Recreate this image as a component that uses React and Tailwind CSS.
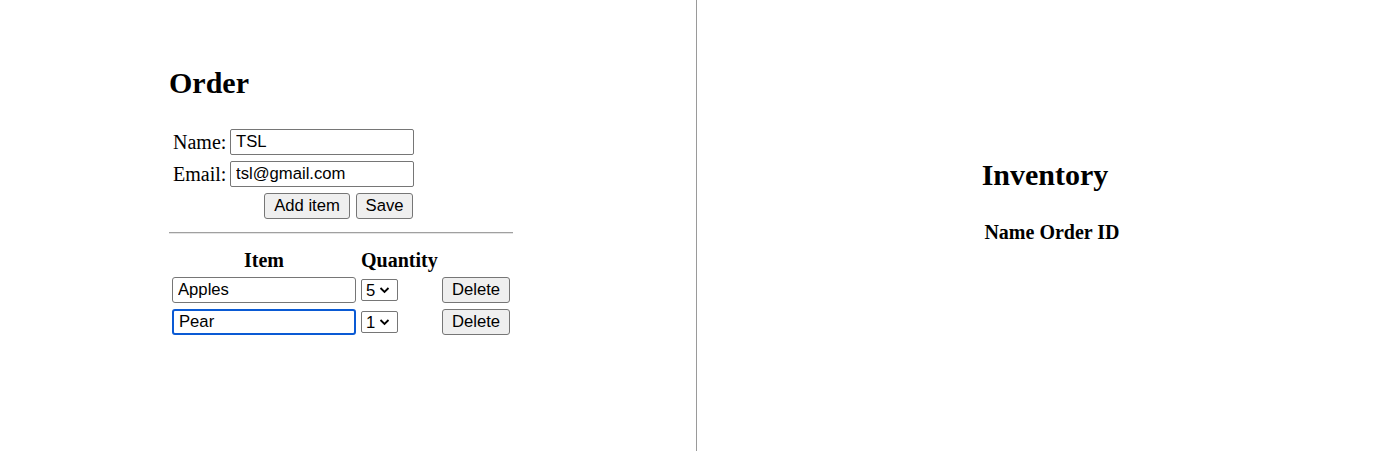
import React from 'react'

const serif = 'font-["Liberation_Serif","Times_New_Roman",serif]'
const sans = 'font-["Liberation_Sans",Arial,sans-serif]'

function Field({ label, value }) {
    return (
        <div className="flex items-center h-[26px]">
            <span className={`w-[61px] pl-[4px] text-[20px] leading-[23px] ${serif}`}>{label}</span>
            <input
                defaultValue={value}
                className={`w-[184px] h-[26px] px-[5px] border border-[#767676] rounded-[2px] text-[16.67px] text-black outline-none ${sans}`}
            />
        </div>
    )
}

function Btn({ children, className = '' }) {
    return (
        <button className={`h-[26px] border border-[#767676] rounded-[3px] bg-[#efefef] text-[16.67px] leading-none text-black ${sans} ${className}`}>
            {children}
        </button>
    )
}

function ItemRow({ name, qty, focused }) {
    return (
        <div className="flex items-center h-[26px]">
            <div className="w-[192px] pl-[3px]">
                <input
                    defaultValue={name}
                    className={`w-[184px] h-[26px] px-[5px] rounded-[3px] text-[16.67px] text-black outline-none ${sans} ${focused ? 'border-2 border-[#0a5ad4] px-[4px]' : 'border border-[#767676]'}`}
                />
            </div>
            <div className="w-[81px]">
                <div className={`w-[37px] h-[22px] border border-[#767676] rounded-[2px] flex items-center pl-[4px] gap-[4px] text-[16.67px] ${sans}`}>
                    <span>{qty}</span>
                    <svg width="11" height="8" viewBox="0 0 11 8" fill="none" stroke="black" strokeWidth="1.8">
                        <path d="M1.5 2 L5.5 6 L9.5 2" />
                    </svg>
                </div>
            </div>
            <Btn className="w-[68px]">Delete</Btn>
        </div>
    )
}

export default function App() {
    return (
        <div className="flex w-[1395px] h-[451px] bg-white text-black">
            {/* Order */}
            <div className="w-[697px] h-full border-r border-[#9a9a9a] pl-[169px] pt-[66px]">
                <div className="w-[344px]">
                    <h2 className={`text-[30px] leading-[34px] font-bold ${serif}`}>Order</h2>
                    <div className="mt-[29px] flex flex-col gap-[6px]">
                        <Field label="Name:" value="TSL" />
                        <Field label="Email:" value="tsl@gmail.com" />
                        <div className="flex gap-[6px] pl-[95px]">
                            <Btn className="w-[86px]">Add item</Btn>
                            <Btn className="w-[57px]">Save</Btn>
                        </div>
                    </div>
                    <div className="mt-[13px] h-[2px] border-t border-[#a0a0a0] border-b border-b-[#e4e4e4]" />
                    <div className={`mt-[15px] flex h-[23px] text-[20px] leading-[23px] font-bold ${serif}`}>
                        <span className="w-[192px] pl-[3px] pr-[5px] text-center">Item</span>
                        <span className="w-[81px]">Quantity</span>
                    </div>
                    <div className="mt-[5px] flex flex-col gap-[6px]">
                        <ItemRow name="Apples" qty="5" />
                        <ItemRow name="Pear" qty="1" focused />
                    </div>
                </div>
            </div>
            {/* Inventory */}
            <div className="flex-1 h-full flex flex-col items-center pt-[158px]">
                <h2 className={`text-[30px] leading-[34px] font-bold pr-[2px] ${serif}`}>Inventory</h2>
                <div className={`mt-[29px] text-[20px] leading-[23px] font-bold flex gap-[5px] pl-[12px] ${serif}`}>
                    <span>Name</span>
                    <span>Order ID</span>
                </div>
            </div>
        </div>
    )
}
